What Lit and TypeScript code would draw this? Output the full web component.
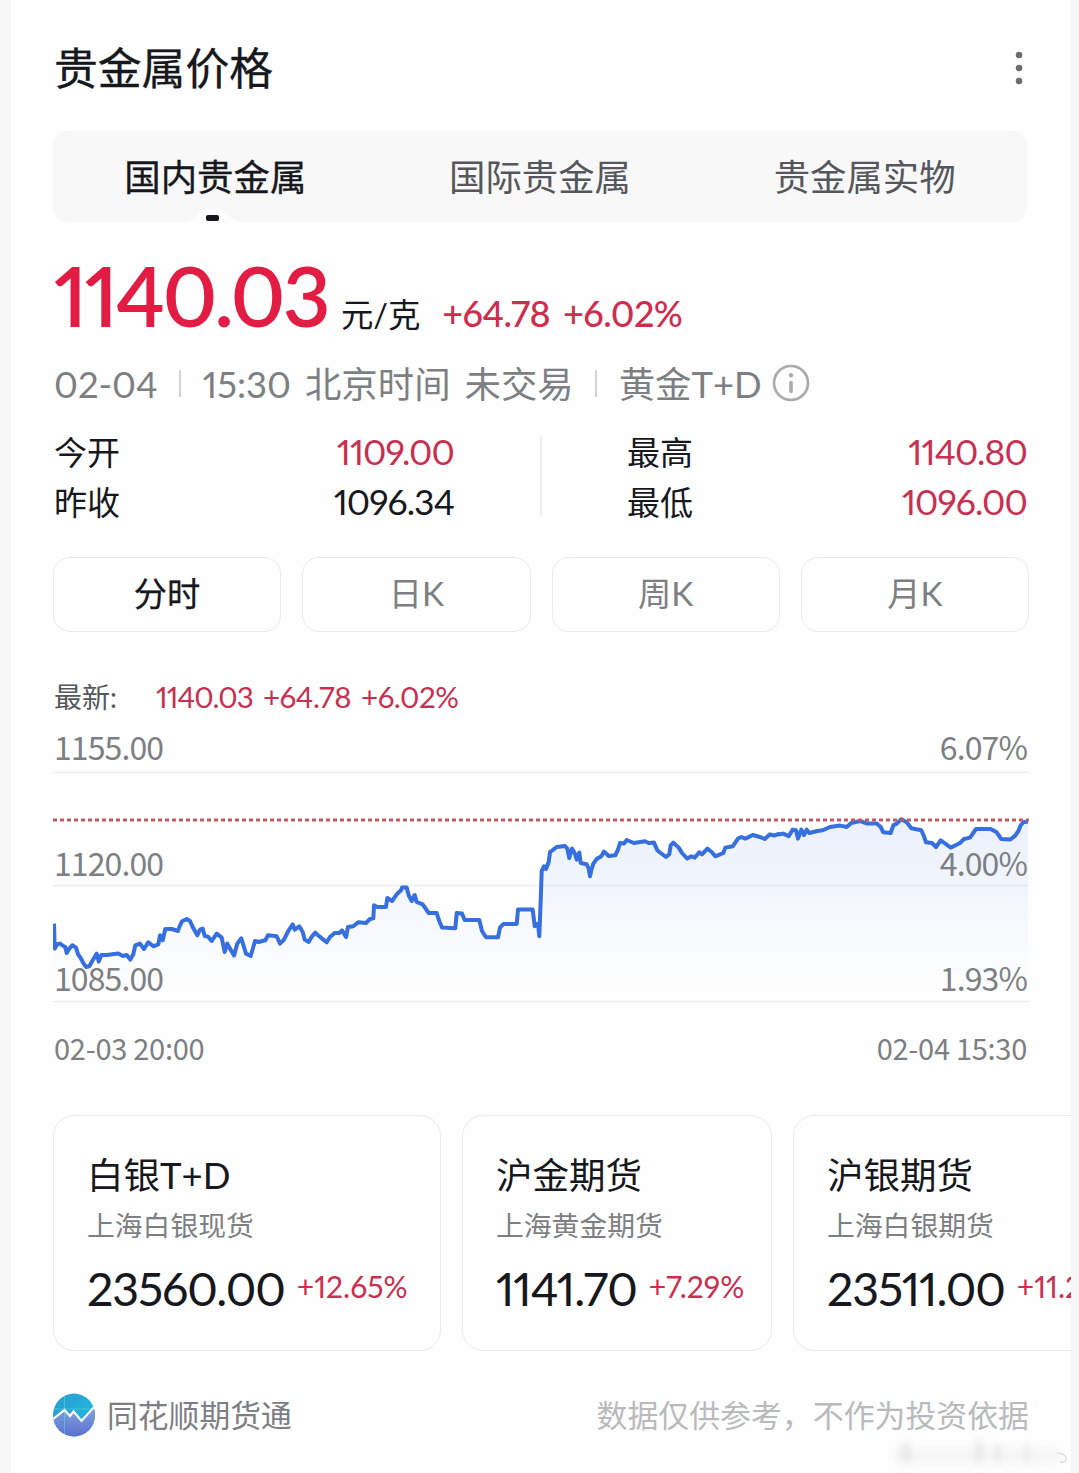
import { LitElement, html, svg, css } from "lit";
import { customElement, property } from "lit/decorators.js";

// Each run holds a horizontal origin and the samples that follow it, in thirds of a unit.
const RUNS: [number, string][] = [
  [40, "42,370 44,445 52,432 60,430 70,437 76,440 80,458 88,445 97,435 108,442 114,462 122,473 130,488 138,500 148,498 155,485 163,472 170,460 176,484 184,464 200,464 235,460 248,467 260,464 271,478 280,462 286,435 300,430 312,446 325,426 340,438 355,432 360,405 368,420 376,386 395,386 414,392 418,380 426,363 440,356 450,362 458,380 472,405 480,388 488,385 494,407 504,409 515,422 530,400 545,412 554,455 562,430 570,445 582,466 592,430 604,414 612,440 618,460 632,467 645,422 656,425 676,420 684,405 710,408 720,430 732,418 745,392"],
  [290, "8,372 14,388 28,378 38,395 44,418 56,425 66,408 76,397 84,405 100,418 110,426 120,410 134,398 148,398 156,390 168,410 174,380 190,378 205,366 228,368 240,356 250,354 252,315 262,320 288,320 292,293 306,302 320,282 333,270 336,262 350,262 356,285 365,302 374,284 380,305 398,312 416,338 440,338 446,358 456,382 496,384 500,338 516,340 524,359 568,359 576,392 588,411 624,411 630,382 640,371 680,371 684,328 728,328 734,378 744,370 748,408 752,300 755,212 762,198 768,206 776,185"],
  [530, "60,155 70,148 80,140 105,137 112,145 118,173 126,145 134,158 140,178 148,157 152,188 170,192 176,205 180,228 184,210 190,190 200,176 214,168 222,154 236,167 256,165 264,148 270,128 282,130 290,119 312,128 345,123 356,128 372,127 382,150 392,158 408,170 418,162 422,135 430,127 446,142 456,158 472,175 484,168 494,172 508,156 516,162 532,145 545,155 556,168 580,158 586,142 608,138 624,115 634,110 646,115 668,104 690,110 704,116 720,102 732,106 746,101"],
  [780, "0,102 10,100 26,108 38,88 48,90 54,115 64,88 72,104 80,88 88,98 112,92 128,90 150,80 180,76 200,80 214,68 240,62 262,70 290,70 302,80 310,96 332,98 340,75 350,70 364,57 380,66 394,84 424,90 432,108 438,126 456,128 468,140 482,120 496,130 512,142 528,134 540,128 552,116 570,112 588,86 632,86 650,96 664,116 690,118 706,106 716,90 722,75 730,66 744,64"],
];

const LINE = "M" + RUNS.flatMap(([x0, run]) =>
  run.split(" ").map((pair) => {
    const [x, y] = pair.split(",").map(Number);
    return `${(x0 + x / 3 - 53).toFixed(1)} ${(y / 3 + 68.3).toFixed(1)}`;
  })
).join("L");

@customElement("trend-chart")
class TrendChart extends LitElement {
  static styles = css`
    :host { display: block; position: relative; height: 280px; }
    svg { display: block; width: 976px; height: 280px; }
    .labels {
      position: absolute; inset: 0 2px 0 1px; display: grid;
      grid-template-rows: 30px 116px 115px; align-items: end;
      color: #7d7f83; font: 32px/32px "Noto Sans CJK SC", sans-serif; letter-spacing: -0.9px;
    }
    .row { display: flex; justify-content: space-between; }
  `;
  render() {
    return html`
      <svg viewBox="0 0 976 280">
        <defs>
          <linearGradient id="fade" x1="0" y1="88" x2="0" y2="270" gradientUnits="userSpaceOnUse">
            <stop offset="0" stop-color="#3a74e0" stop-opacity="0.1"></stop>
            <stop offset="0.4" stop-color="#3a74e0" stop-opacity="0.06"></stop>
            <stop offset="0.75" stop-color="#3a74e0" stop-opacity="0.015"></stop>
            <stop offset="1" stop-color="#3a74e0" stop-opacity="0"></stop>
          </linearGradient>
        </defs>
        ${[40.5, 153.5, 269.5].map((y) => svg`<path d=${`M0 ${y}H976`} stroke="#efeff1" stroke-width="1.6"></path>`)}
        <path d=${LINE + "L975 269L1 269Z"} fill="url(#fade)"></path>
        <path d=${LINE} fill="none" stroke="#366fdf" stroke-width="4" stroke-linejoin="round"></path>
        <path d="M0 88H976" stroke="#c25a66" stroke-width="2.8" stroke-dasharray="4 3"></path>
      </svg>
      <div class="labels">
        <div class="row"><span>1155.00</span><span>6.07%</span></div>
        <div class="row"><span>1120.00</span><span>4.00%</span></div>
        <div class="row"><span>1085.00</span><span>1.93%</span></div>
      </div>
    `;
  }
}

@customElement("quote-card")
class QuoteCard extends LitElement {
  @property() name = "";
  @property() note = "";
  @property() price = "";
  @property() change = "";
  static styles = css`
    :host {
      display: block; box-sizing: border-box; flex: none; height: 236px;
      border: 1.5px solid #ebebed; border-radius: 21px; padding: 34px 0 0 33px;
      white-space: nowrap; color: #16181d;
      font-family: Lato, "Noto Sans CJK SC", sans-serif; font-feature-settings: "pnum";
    }
    .name { font-size: 36.5px; line-height: 50px; }
    .note { font-size: 27.8px; line-height: 40px; margin-top: 6px; color: #7d7f83; }
    .quote { display: flex; align-items: baseline; gap: 12px; margin-top: 13px; line-height: 59px; }
    .price { font-size: 46.5px; letter-spacing: -1.1px; -webkit-text-stroke: 0.1px currentColor; }
    .change { font-size: 30px; color: #c92f50; position: relative; top: -8px; }
  `;
  render() {
    return html`
      <div class="name">${this.name}</div>
      <div class="note">${this.note}</div>
      <div class="quote"><span class="price">${this.price}</span><span class="change">${this.change}</span></div>
    `;
  }
}

@customElement("app-root")
class AppRoot extends LitElement {
  static styles = css`
    :host {
      display: block; height: 1473px; background: #f7f7f7; overflow: hidden;
      font-family: Lato, "Noto Sans CJK SC", sans-serif; font-feature-settings: "pnum";
      color: #16181d; white-space: nowrap;
    }
    .sheet {
      box-sizing: border-box; width: 1060px; height: 1473px; margin-left: 11px;
      padding: 0 42px; background: #fefefe; overflow: hidden; position: relative;
      display: flex; flex-direction: column;
    }
    .head { display: flex; justify-content: space-between; height: 131px; flex: none; }
    .title { margin: 36px 0 0 1px; font-size: 43.8px; line-height: 64px; font-weight: 400; -webkit-text-stroke: 0.35px currentColor; }
    .dots { width: 12px; height: 40px; margin: 48px 4px 0 0; }
    .tabs {
      position: relative; display: grid; grid-template-columns: repeat(3, 1fr);
      width: 974px; height: 91px; flex: none; background: #f8f8f8; border-radius: 15px;
      font-size: 36.4px; line-height: 92px; text-align: center; color: #55575c;
    }
    .tab.on { color: #16181d; -webkit-text-stroke: 0.35px currentColor; }
    .notch { position: absolute; left: 130px; bottom: 0; width: 60px; height: 15px; }
    .main { display: flex; align-items: baseline; height: 127px; flex: none; line-height: 147px; padding-left: 1px; }
    .last { font-size: 83px; font-weight: 600; letter-spacing: -2.75px; color: #e31c43; }
    .unit { font-size: 32.4px; margin-left: 13px; }
    .delta { font-size: 36px; font-weight: 500; letter-spacing: -0.6px; color: #cf2c4e; margin-left: 22px; }
    .delta + .delta { margin-left: 13px; }
    .meta { display: flex; align-items: center; height: 68px; flex: none; color: #7d7f83; font-size: 36.4px; line-height: 68px; padding-left: 1px; }
    .meta span { padding-top: 1px; }
    .bar { width: 1.5px; height: 27px; background: #d4d4d6; margin: 0 22px 0 21.5px; }
    .gap { margin-left: 14px; }
    .info { width: 38px; height: 38px; margin-left: 10px; }
    .stats { display: grid; grid-template-columns: 400px 87px 86px 400px; grid-template-rows: 50px 50px; width: 975px; height: 140px; padding: 10px 0 0 1px; box-sizing: border-box; flex: none; line-height: 50px; font-size: 33px; }
    .pair { display: flex; justify-content: space-between; }
    .rule { grid-column: 2; grid-row: 1 / 3; width: 1.5px; height: 80px; background: #eeeeef; margin: 9px 0 0 86px; }
    .right { grid-column: 4; }
    .num { font-size: 35.5px; letter-spacing: -0.9px; line-height: 49px; }
    .up { color: #c92f50; }
    .periods { display: grid; grid-template-columns: repeat(4, 1fr); gap: 21px; width: 976px; height: 75px; flex: none; }
    .period { border: 1.5px solid #ebebed; border-radius: 17px; text-align: center; font-size: 33.3px; line-height: 71px; color: #7d7f83; }
    .period.on { color: #16181d; -webkit-text-stroke: 0.3px currentColor; }
    .latest { display: flex; align-items: baseline; height: 100px; flex: none; font-size: 28px; line-height: 129px; color: #55575c; padding-left: 1px; }
    .latest .up { font-size: 29.5px; letter-spacing: -0.5px; margin-left: 10px; }
    .latest .up.first { margin-left: 39px; letter-spacing: -0.9px; }
    .axis { display: flex; justify-content: space-between; width: 974px; height: 103px; flex: none; font: 29px/70px "Noto Sans CJK SC", sans-serif; color: #7d7f83; letter-spacing: -0.28px; padding-left: 1px; box-sizing: border-box; }
    .cards { display: flex; gap: 21px; flex: none; margin-right: -42px; }
    .c1 { width: 388px; }
    .c2 { width: 310px; }
    .c3 { width: 388px; }
    .foot { display: flex; align-items: center; width: 976px; height: 128px; flex: none; font-size: 30.8px; color: #7d7f83; }
    .foot span { padding-bottom: 4px; }
    .logo { width: 42px; height: 44px; margin-right: 12px; }
    .foot .tip { margin-left: auto; color: #b9babc; font-size: 30.9px; }
    .smudge { position: absolute; right: 0; bottom: 0; width: 184px; height: 38px; }
  `;
  render() {
    return html`
      <div class="sheet">
        <div class="head">
          <h1 class="title">贵金属价格</h1>
          <svg class="dots" viewBox="0 0 12 40" fill="#6d6d70">
            <circle cx="6" cy="7" r="3.3"></circle><circle cx="6" cy="20" r="3.3"></circle><circle cx="6" cy="33" r="3.3"></circle>
          </svg>
        </div>
        <div class="tabs">
          <span class="tab on">国内贵金属</span><span class="tab">国际贵金属</span><span class="tab">贵金属实物</span>
          <svg class="notch" viewBox="0 0 60 15">
            <path d="M0 15C14 14 16 2 25 2H35C44 2 46 14 60 15Z" fill="#fefefe"></path>
            <rect x="23" y="8" width="13" height="6" rx="2" fill="#16181d"></rect>
          </svg>
        </div>
        <div class="main">
          <span class="last">1140.03</span><span class="unit">元/克</span>
          <span class="delta">+64.78</span><span class="delta">+6.02%</span>
        </div>
        <div class="meta">
          <span>02-04</span><i class="bar"></i><span>15:30</span><span class="gap">北京时间</span><span class="gap">未交易</span>
          <i class="bar"></i><span>黄金T+D</span>
          <svg class="info" viewBox="0 0 38 38">
            <circle cx="19" cy="19" r="17" fill="none" stroke="#ababad" stroke-width="2.7"></circle>
            <circle cx="19" cy="11.2" r="2.2" fill="#ababad"></circle>
            <path d="M19 18.5V27.5" stroke="#ababad" stroke-width="3.6" stroke-linecap="round"></path>
          </svg>
        </div>
        <div class="stats">
          <div class="pair"><span>今开</span><span class="num up">1109.00</span></div>
          <i class="rule"></i>
          <div class="pair right"><span>最高</span><span class="num up">1140.80</span></div>
          <div class="pair"><span>昨收</span><span class="num">1096.34</span></div>
          <div class="pair right"><span>最低</span><span class="num up">1096.00</span></div>
        </div>
        <div class="periods">
          <div class="period on">分时</div><div class="period">日K</div><div class="period">周K</div><div class="period">月K</div>
        </div>
        <div class="latest">
          <span>最新:</span><span class="up first">1140.03</span><span class="up">+64.78</span><span class="up">+6.02%</span>
        </div>
        <trend-chart></trend-chart>
        <div class="axis"><span>02-03 20:00</span><span>02-04 15:30</span></div>
        <div class="cards">
          <quote-card class="c1" name="白银T+D" note="上海白银现货" price="23560.00" change="+12.65%"></quote-card>
          <quote-card class="c2" name="沪金期货" note="上海黄金期货" price="1141.70" change="+7.29%"></quote-card>
          <quote-card class="c3" name="沪银期货" note="上海白银期货" price="23511.00" change="+11.2"></quote-card>
        </div>
        <div class="foot">
          <svg class="logo" viewBox="0 0 42 44">
            <defs>
              <linearGradient id="sky" x1="0" y1="0" x2="1" y2="0.6"><stop offset="0" stop-color="#2b9ccb"></stop><stop offset="1" stop-color="#22b6df"></stop></linearGradient>
              <linearGradient id="sea" x1="0" y1="0" x2="0" y2="1"><stop offset="0" stop-color="#82a6e0"></stop><stop offset="1" stop-color="#5a6fd0"></stop></linearGradient>
              <clipPath id="disc"><ellipse cx="21" cy="22" rx="21" ry="21.5"></ellipse></clipPath>
            </defs>
            <g clip-path="url(#disc)">
              <path d="M0 0H42V44H0Z" fill="url(#sky)"></path>
              <path d="M-1 27L11.5 17L17 23L20.5 18.5L28.5 28L42 13V44H0Z" fill="url(#sea)"></path>
              <path d="M11.5 0V44M0 16H42" stroke="#58e0dc" stroke-opacity="0.5" stroke-width="1"></path>
              <path d="M-1 27L11.5 17L17 23L20.5 18.5L28.5 28L42 13" fill="none" stroke="#fff" stroke-width="2.1"></path>
            </g>
          </svg>
          <span>同花顺期货通</span><span class="tip">数据仅供参考，不作为投资依据</span>
        </div>
        <svg class="smudge" viewBox="0 0 184 38">
          <defs><filter id="soft" x="-20%" y="-50%" width="140%" height="200%"><feGaussianBlur stdDeviation="3 4"></feGaussianBlur></filter></defs>
          <g filter="url(#soft)" fill="#dcdcdc" opacity="0.6">
            <path d="M8 14H172V28H8Z" opacity="0.45"></path>
            <path d="M14 8H24V28H14ZM88 6H96V28H88ZM108 10H114V28H108ZM137 10H142V28H137Z"></path>
          </g>
          <path d="M170 18Q180 19 179 25Q178 28 173 27" fill="none" stroke="#dedede" stroke-width="1.3"></path>
        </svg>
      </div>
    `;
  }
}
